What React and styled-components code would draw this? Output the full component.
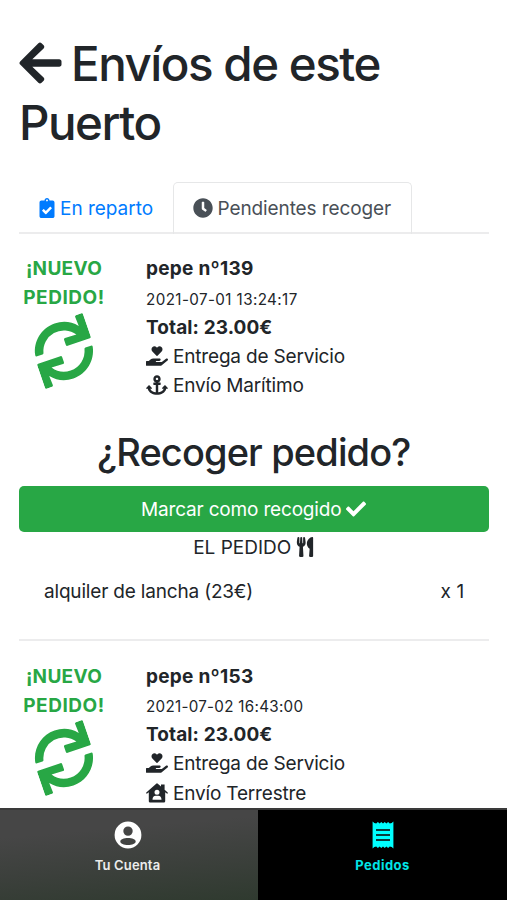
import React from "react";
import styled, { createGlobalStyle } from "styled-components";
import {
  FaArrowLeft,
  FaClipboardCheck,
  FaClock,
  FaSync,
  FaHandHoldingHeart,
  FaAnchor,
  FaCheck,
  FaUtensils,
} from "react-icons/fa";

const GlobalStyle = createGlobalStyle`
  *, *::before, *::after { box-sizing: border-box; }
  body {
    margin: 0;
    background: #fff;
    color: #212529;
    font-family: Inter, "Liberation Sans", sans-serif;
    font-size: 19px;
    line-height: 29.25px;
  }
`;

const Screen = styled.div`
  display: flex;
  flex-direction: column;
  height: 900px;
  overflow: hidden;
`;

const Content = styled.main`
  flex: 1;
  min-height: 0;
  overflow: hidden;
  padding: 35px 18.5px 0 19px;
`;

const Text = styled.span`
  letter-spacing: ${(p) => p.$tracking || "-0.18px"};
  white-space: nowrap;
`;

const Title = styled.h1`
  margin: 0 0 29px;
  font-size: 47.5px;
  line-height: 58.8px;
  font-weight: 500;
  letter-spacing: -1.48px;

  svg {
    width: 43px;
    height: 48px;
    margin: 0 9px 0 0;
    vertical-align: -6px;
  }
`;

const Tabs = styled.nav`
  display: flex;
  height: 52px;
  border-bottom: 2px solid #ececed;
`;

const Tab = styled.a`
  display: flex;
  align-items: center;
  gap: 5px;
  width: ${(p) => (p.$active ? "239px" : "153.5px")};
  height: 52px;
  padding: 1px 0 0 19px;
  border: 1.5px solid ${(p) => (p.$active ? "#e6e7e8" : "transparent")};
  border-bottom: 0;
  border-radius: 5px 5px 0 0;
  color: ${(p) => (p.$active ? "#495057" : "#007bff")};

  svg {
    width: ${(p) => (p.$active ? "20px" : "16px")};
    height: 20px;
    margin-bottom: 2px;
  }
`;

const Order = styled.article`
  display: grid;
  grid-template-columns: 90px 1fr;
  column-gap: 37px;
  margin-top: 20.5px;
`;

const Status = styled.div`
  display: flex;
  flex-direction: column;
  align-items: center;
  color: #28a745;
  font-weight: 700;

  svg {
    width: 60px;
    height: 60px;
    margin-top: 8px;
    transform: rotate(-19deg);
  }
`;

const Details = styled.div`
  display: flex;
  flex-direction: column;
`;

const Line = styled.div`
  display: flex;
  align-items: center;
  height: 29.25px;
  font-weight: ${(p) => (p.$bold ? 700 : 400)};
  font-size: ${(p) => (p.$small ? "15.2px" : "19px")};
  padding-top: ${(p) => (p.$small ? "3px" : "0")};

  svg {
    width: 22px;
    height: 20px;
    margin: 0 5px 1px 0;
  }
`;

const Prompt = styled.h2`
  margin: 28.5px 0 10px;
  font-size: 38px;
  line-height: 47px;
  font-weight: 500;
  letter-spacing: -0.87px;
  text-align: center;
`;

const PickupButton = styled.button`
  display: flex;
  align-items: center;
  justify-content: center;
  gap: 5px;
  width: 100%;
  height: 46px;
  padding: 2px 0 0;
  border: 0;
  border-radius: 5px;
  background: #28a745;
  color: #fff;
  font: inherit;

  svg {
    width: 20px;
    height: 20px;
    margin-bottom: 2px;
  }
`;

const ItemsTitle = styled.div`
  display: flex;
  align-items: center;
  justify-content: center;
  gap: 5px;
  height: 31px;

  svg {
    width: 18px;
    height: 20px;
    margin-bottom: 1px;
  }
`;

const Item = styled.div`
  display: flex;
  justify-content: space-between;
  padding: 14px 24px 33px 25px;
  border-bottom: 2px solid #ececed;
`;

const BottomBar = styled.footer`
  display: flex;
  flex: none;
  height: 92px;
  border-top: 2px solid #3a3a3a;
  background: #000;
`;

const BarTab = styled.a`
  display: flex;
  flex-direction: column;
  align-items: center;
  width: ${(p) => (p.$active ? "249px" : "258px")};
  padding-top: 11px;
  padding-right: ${(p) => (p.$active ? "0" : "3px")};
  background: ${(p) =>
    p.$active ? "#000" : "linear-gradient(175deg, #464646 25%, #3c403c 60%, #2f3a2f 100%)"};
  color: ${(p) => (p.$active ? "#00ffff" : "#fff")};
  font-size: 13px;
  line-height: 20px;
  font-weight: ${(p) => (p.$active ? 700 : 600)};

  svg {
    width: 28px;
    height: 28px;
    margin-bottom: 6px;
  }
`;

const BarLabel = styled.span`
  color: ${(p) => (p.$active ? "#00e5e8" : "#ececec")};
  letter-spacing: ${(p) => (p.$active ? "0.5px" : "0.16px")};
`;

function HouseUserIcon() {
  return (
    <svg viewBox="0 0 22 20" fill="currentColor">
      <path
        fillRule="evenodd"
        d="M10.2.7a1.2 1.2 0 0 1 1.6 0L15 3.5V1.6h3.6v5.1l3.1 2.8c.5.5-.3 1.6-.9 1.1L19.200 9.300V18.200a1.300 1.300 0 0 1-1.300 1.300H4.100a1.300 1.300 0 0 1-1.300-1.300V9.300L1.200 10.600C.6 11.100-.2 10 .3 9.500ZM11 6.800a2.500 2.500 0 1 0 0 5 2.500 2.500 0 0 0 0-5ZM6.500 16.700h9c0-2.400-1.300-4-3.200-4H9.700c-1.900 0-3.200 1.600-3.200 4Z"
      />
    </svg>
  );
}

function AccountIcon() {
  return (
    <svg viewBox="0 0 28 28" fill="currentColor">
      <path
        fillRule="evenodd"
        d="M14 .6a13.400 13.400 0 1 0 0 26.800A13.400 13.400 0 0 0 14 .6ZM14 5.400a4.700 4.700 0 1 1 0 9.400 4.700 4.700 0 0 1 0-9.400ZM14 17c4.200 0 7.700 1.500 7.700 3.500S18.200 24 14 24s-7.700-1.500-7.700-3.500S9.800 17 14 17Z"
      />
    </svg>
  );
}

function ReceiptIcon() {
  return (
    <svg viewBox="0 0 28 28">
      <path
        fill="currentColor"
        d="M3.600.6 5.300 2 7.200 2.600 8.900 1 10.600 2.600 12.300 1 14 2.600 15.700 1 17.400 2.600 19.100 1 20.800 2.600 22.700 2 24.400.6V27.400L22.700 26 20.800 25.400 19.100 27 17.400 25.400 15.700 27 14 25.400 12.300 27 10.600 25.400 8.900 27 7.200 25.400 5.300 26 3.600 27.400Z"
      />
      <path fill="none" stroke="#083c3c" strokeWidth="1.900" d="M7 9H21M7 14H21M7 19H21" />
    </svg>
  );
}

function OrderSummary({ name, date, dateTracking, shipping, icon }) {
  return (
    <Order>
      <Status>
        <Text $tracking="0.3px">¡NUEVO</Text>
        <Text $tracking="0.55px">PEDIDO!</Text>
        <FaSync />
      </Status>
      <Details>
        <Line $bold><Text $tracking="0.28px">{name}</Text></Line>
        <Line $small><Text $tracking={dateTracking}>{date}</Text></Line>
        <Line $bold><Text $tracking="0.1px">Total: 23.00€</Text></Line>
        <Line><FaHandHoldingHeart /><Text>Entrega de Servicio</Text></Line>
        <Line>{icon}<Text>{shipping}</Text></Line>
      </Details>
    </Order>
  );
}

export default function App() {
  return (
    <Screen>
      <GlobalStyle />
      <Content>
        <Title><FaArrowLeft />Envíos de este Puerto</Title>
        <Tabs>
          <Tab><FaClipboardCheck /><Text $tracking="-0.02px">En reparto</Text></Tab>
          <Tab $active><FaClock /><Text $tracking="-0.1px">Pendientes recoger</Text></Tab>
        </Tabs>
        <OrderSummary
          name="pepe nº139"
          date="2021-07-01 13:24:17"
          dateTracking="0.4px"
          shipping="Envío Marítimo"
          icon={<FaAnchor />}
        />
        <Prompt>¿Recoger pedido?</Prompt>
        <PickupButton><Text>Marcar como recogido</Text><FaCheck /></PickupButton>
        <ItemsTitle><Text $tracking="0px">EL PEDIDO</Text><FaUtensils /></ItemsTitle>
        <Item><Text>alquiler de lancha (23€)</Text><Text $tracking="0.2px">x 1</Text></Item>
        <OrderSummary
          name="pepe nº153"
          date="2021-07-02 16:43:00"
          dateTracking="0.28px"
          shipping="Envío Terrestre"
          icon={<HouseUserIcon />}
        />
      </Content>
      <BottomBar>
        <BarTab><AccountIcon /><BarLabel>Tu Cuenta</BarLabel></BarTab>
        <BarTab $active><ReceiptIcon /><BarLabel $active>Pedidos</BarLabel></BarTab>
      </BottomBar>
    </Screen>
  );
}
